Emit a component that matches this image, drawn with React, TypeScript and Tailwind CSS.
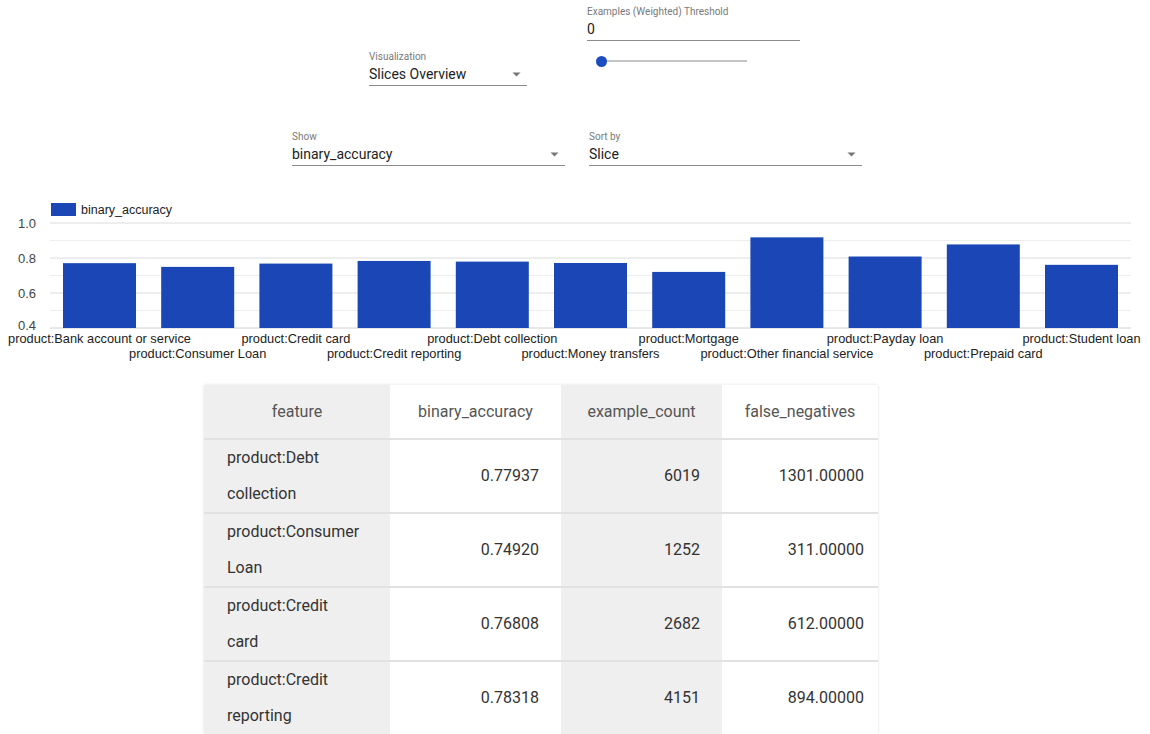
import React from "react";

const BAR = "#1a47b5";

const slices = [
  { name: "product:Bank account or service", value: 0.7705 },
  { name: "product:Consumer Loan", value: 0.7492 },
  { name: "product:Credit card", value: 0.76808 },
  { name: "product:Credit reporting", value: 0.78318 },
  { name: "product:Debt collection", value: 0.77937 },
  { name: "product:Money transfers", value: 0.7715 },
  { name: "product:Mortgage", value: 0.7205 },
  { name: "product:Other financial service", value: 0.918 },
  { name: "product:Payday loan", value: 0.8085 },
  { name: "product:Prepaid card", value: 0.8775 },
  { name: "product:Student loan", value: 0.761 },
];

const rows = [
  { feature: ["product:Debt", "collection"], acc: "0.77937", count: "6019", fn: "1301.00000" },
  { feature: ["product:Consumer", "Loan"], acc: "0.74920", count: "1252", fn: "311.00000" },
  { feature: ["product:Credit", "card"], acc: "0.76808", count: "2682", fn: "612.00000" },
  { feature: ["product:Credit", "reporting"], acc: "0.78318", count: "4151", fn: "894.00000" },
];

function Caret() {
  return (
    <svg width="9" height="5" viewBox="0 0 9 5" className="shrink-0">
      <path d="M0.5 0.5 L8.5 0.5 L4.5 4.5 Z" fill="#777" />
    </svg>
  );
}

function Select({ label, value, width }: { label: string; value: string; width: string }) {
  return (
    <div className={`flex flex-col ${width}`}>
      <div className="text-[10px] leading-[12px] text-[#7a7a7a]">{label}</div>
      <div className="mt-px flex h-[22px] items-center justify-between border-b border-[#8c8c8c] pr-[6px] text-[14px] text-[#222]">
        <span>{value}</span>
        <Caret />
      </div>
    </div>
  );
}

// y for a metric value, 0.4 sits on the baseline
const yOf = (v: number) => 133 - (v - 0.4) * 175;

function Chart() {
  const grid = [1.0, 0.9, 0.8, 0.7, 0.6, 0.5];
  return (
    <svg width="1150" height="175" className="block" style={{ fontFamily: '"Liberation Sans", Arial, sans-serif' }}>
      <rect x="51" y="8" width="25" height="13" fill={BAR} />
      <text x="81" y="19" fontSize="12.5" fill="#222">binary_accuracy</text>

      {grid.map((g, i) => (
        <line key={g} x1="50" x2="1131" y1={yOf(g)} y2={yOf(g)} stroke={i % 2 === 0 ? "#dcdcdc" : "#eeeeee"} strokeWidth="1" />
      ))}
      <line x1="50" x2="1131" y1="133" y2="133" stroke="#d0d0d0" strokeWidth="1" />

      {[1.0, 0.8, 0.6].map((g) => (
        <text key={g} x="36" y={yOf(g) + 5} fontSize="13" fill="#444" textAnchor="end">{g.toFixed(1)}</text>
      ))}
      <text x="36" y="135" fontSize="13" fill="#444" textAnchor="end">0.4</text>

      {slices.map((s, i) => {
        const x = 63 + i * 98.2;
        const top = yOf(s.value);
        return (
          <g key={s.name}>
            <rect x={x} y={top} width="73" height={133 - top} fill={BAR} />
            <text x={x + 36.5} y={i % 2 === 0 ? 148 : 163} fontSize="12.8" fill="#222" textAnchor="middle">{s.name}</text>
          </g>
        );
      })}
    </svg>
  );
}

export default function App() {
  return (
    <div className="h-[734px] w-[1150px] overflow-hidden bg-white" style={{ fontFamily: "Roboto, 'Liberation Sans', sans-serif" }}>
      {/* top controls */}
      <div className="flex h-[90px] items-start pl-[369px]">
        <div className="mt-[51px]">
          <Select label="Visualization" value="Slices Overview" width="w-[158px]" />
        </div>
        <div className="ml-[60px] mt-[6px] flex w-[213px] flex-col">
          <div className="text-[10px] leading-[12px] text-[#7a7a7a]">Examples (Weighted) Threshold</div>
          <div className="mt-px flex h-[22px] items-center border-b border-[#8c8c8c] text-[14px] text-[#222]">0</div>
          <div className="relative mt-[14px] h-[12px] w-[160px]">
            <div className="absolute left-[14px] right-0 top-[5px] h-[2px] bg-[#c4c4c4]" />
            <div className="absolute left-[9px] top-px h-[11px] w-[11px] rounded-full bg-[#1b4cc0]" />
          </div>
        </div>
      </div>

      <div className="mt-[41px] flex gap-[24px] pl-[292px]">
        <Select label="Show" value="binary_accuracy" width="w-[273px]" />
        <Select label="Sort by" value="Slice" width="w-[273px]" />
      </div>

      <div className="mt-[29px]">
        <Chart />
      </div>

      {/* metrics table */}
      <div className="ml-[204px] mt-[15px] w-[674px] text-[16px] shadow-[0_0_3px_rgba(0,0,0,0.12)]">
        <div className="grid h-[53px] grid-cols-[186px_171px_161px_156px] text-[#555]">
          <div className="flex items-center justify-center bg-[#efefef]">feature</div>
          <div className="flex items-center justify-center bg-white">binary_accuracy</div>
          <div className="flex items-center justify-center bg-[#efefef]">example_count</div>
          <div className="flex items-center justify-center bg-white">false_negatives</div>
        </div>
        {rows.map((r) => (
          <div key={r.feature.join(" ")} className="grid grid-cols-[186px_171px_161px_156px] border-t-2 border-[#e2e2e2] text-[#333]">
            <div className="bg-[#efefef] pl-[23px] leading-[36px]">
              <div>{r.feature[0]}</div>
              <div>{r.feature[1]}</div>
            </div>
            <div className="flex items-center justify-end bg-white pr-[22px]">{r.acc}</div>
            <div className="flex items-center justify-end bg-[#efefef] pr-[22px]">{r.count}</div>
            <div className="flex items-center justify-end bg-white pr-[14px]">{r.fn}</div>
          </div>
        ))}
      </div>
    </div>
  );
}
